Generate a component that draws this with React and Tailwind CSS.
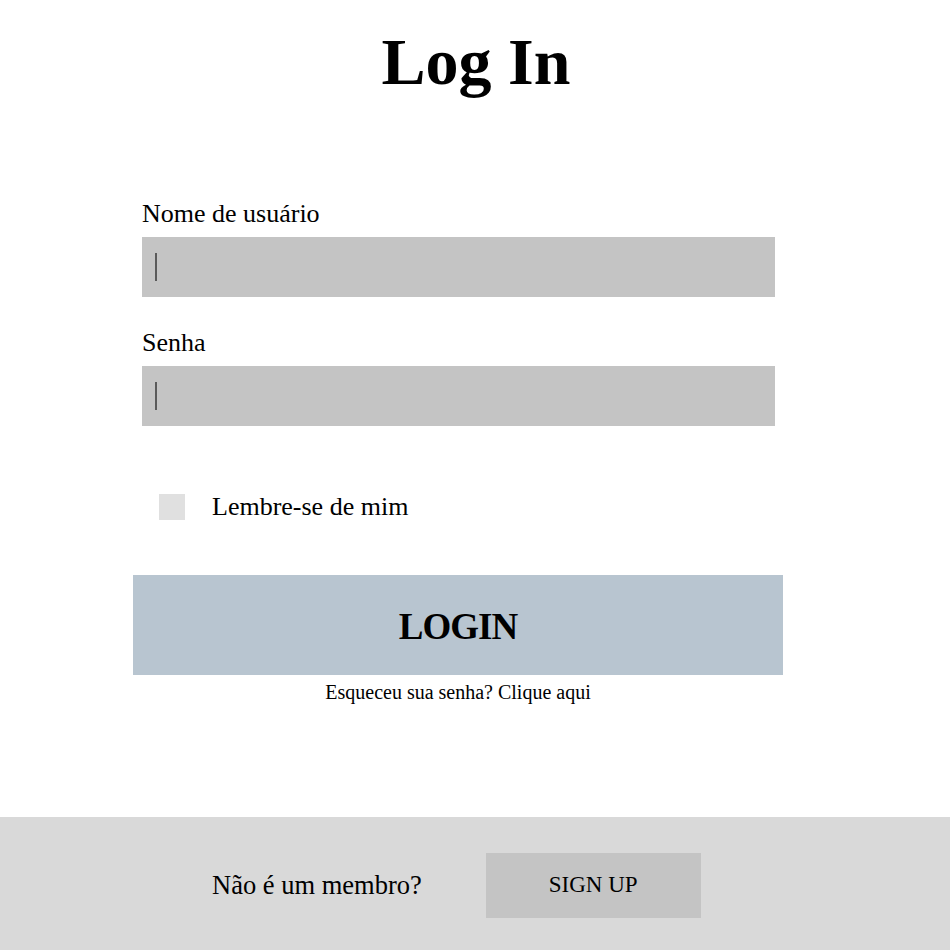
export default function App() {
  const serif = { fontFamily: '"Liberation Serif", "DejaVu Serif", serif' }

  return (
    <div className="w-[950px] h-[950px] bg-white flex flex-col text-black" style={serif}>
      <div className="flex-1 flex flex-col">
        <h1 className="text-center font-bold text-[66px] leading-none mt-[29px] pl-[2px]">Log In</h1>

        <div className="flex flex-col mt-[104px] pl-[142px] w-[775px]">
          <label className="text-[26px] leading-none pt-[2px]">Nome de usuário</label>
          <div className="mt-[10px] h-[60px] bg-[#c4c4c4] flex items-center pl-[13px]">
            <div className="w-[2px] h-[28px] bg-[#5a5a5a]" />
          </div>

          <label className="mt-[31px] text-[26px] leading-none pt-[2px]">Senha</label>
          <div className="mt-[10px] h-[60px] bg-[#c4c4c4] flex items-center pl-[13px]">
            <div className="w-[2px] h-[28px] bg-[#5a5a5a]" />
          </div>

          <div className="mt-[68px] flex items-center pl-[17px] gap-[27px]">
            <div className="w-[26px] h-[26px] bg-[#e0e0e0]" />
            <span className="text-[26px] leading-none">Lembre-se de mim</span>
          </div>
        </div>

        <div className="mt-[55px] ml-[133px] w-[650px] flex flex-col items-center">
          <button className="w-full h-[100px] pt-[4px] bg-[#b8c5d0] font-bold text-[37px] tracking-tight">LOGIN</button>
          <span className="mt-[7px] text-[20px] leading-none">Esqueceu sua senha? Clique aqui</span>
        </div>
      </div>

      <div className="h-[133px] bg-[#d9d9d9] flex items-start pt-[36px] pl-[212px] gap-[64px]">
        <span className="text-[26.5px] leading-[65px]">Não é um membro?</span>
        <button className="w-[215px] h-[65px] bg-[#c4c4c4] text-[23px]">SIGN UP</button>
      </div>
    </div>
  )
}
